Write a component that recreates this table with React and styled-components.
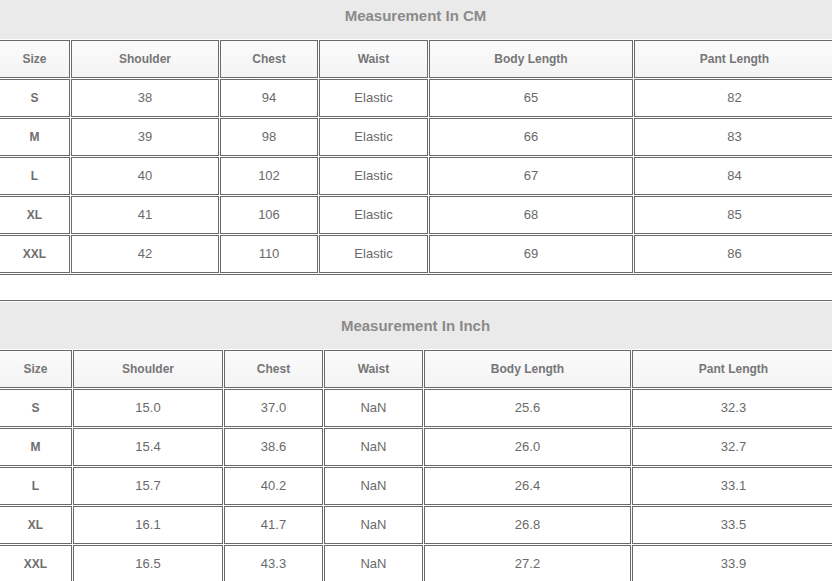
import styled, { createGlobalStyle } from 'styled-components';

const GlobalStyle = createGlobalStyle`
  html, body {
    margin: 0;
    padding: 0;
    background: #fff;
  }
  body {
    font-family: 'Liberation Sans', Arial, sans-serif;
  }
`

const headers = ['Size', 'Shoulder', 'Chest', 'Waist', 'Body Length', 'Pant Length'];

const charts = [
  {
    title: 'Measurement In CM',
    columns: [71, 148, 98, 109, 204, 201],
    rows: [
      ['S', '38', '94', 'Elastic', '65', '82'],
      ['M', '39', '98', 'Elastic', '66', '83'],
      ['L', '40', '102', 'Elastic', '67', '84'],
      ['XL', '41', '106', 'Elastic', '68', '85'],
      ['XXL', '42', '110', 'Elastic', '69', '86'],
    ],
  },
  {
    title: 'Measurement In Inch',
    columns: [73, 150, 99, 99, 207, 203],
    rows: [
      ['S', '15.0', '37.0', 'NaN', '25.6', '32.3'],
      ['M', '15.4', '38.6', 'NaN', '26.0', '32.7'],
      ['L', '15.7', '40.2', 'NaN', '26.4', '33.1'],
      ['XL', '16.1', '41.7', 'NaN', '26.8', '33.5'],
      ['XXL', '16.5', '43.3', 'NaN', '27.2', '33.9'],
    ],
  },
];

export default function App() {
  return (
    <Page>
      <GlobalStyle />
      {charts.map((chart, i) => (
        <Chart key={chart.title} $first={i === 0}>
          <Band>{chart.title}</Band>
          <Grid $cols={chart.columns.map((w) => w + 'px').join(' ')}>
            {headers.map((h) => (
              <HeadCell key={h}>{h}</HeadCell>
            ))}
            {chart.rows.map((row) =>
              row.map((v, j) => (
                <Cell key={row[0] + j} $size={j === 0}>
                  {v}
                </Cell>
              ))
            )}
          </Grid>
        </Chart>
      ))}
    </Page>
  )
}

const Page = styled.div`
  width: 832px;
  height: 581px;
  overflow: hidden;
  background: #fff;
`

const Chart = styled.div`
  margin: ${(p) => (p.$first ? '-10px' : '25px')} -2px 0 -3px;
  border: 1px solid #6a6a6a;
  padding: 1px;
  background: #fff;
`

const Band = styled.div`
  height: 47px;
  display: flex;
  align-items: center;
  justify-content: center;
  background: #eaeaea;
  color: #8a8a8a;
  font-size: 15px;
  font-weight: bold;
`

const Grid = styled.div`
  display: grid;
  grid-template-columns: ${(p) => p.$cols};
  grid-auto-rows: 38px;
  gap: 1px;
  margin-top: 1px;
`

const HeadCell = styled.div`
  box-sizing: border-box;
  border: 1px solid #6a6a6a;
  background: linear-gradient(180deg, #fbfbfb 0%, #f4f4f4 100%);
  display: flex;
  align-items: center;
  justify-content: center;
  color: #767676;
  font-size: 12px;
  font-weight: bold;
`

const Cell = styled.div`
  box-sizing: border-box;
  border: 1px solid #6a6a6a;
  background: #fff;
  display: flex;
  align-items: center;
  justify-content: center;
  padding-bottom: 1px;
  color: ${(p) => (p.$size ? '#6e6e6e' : '#6a6a6a')};
  font-size: ${(p) => (p.$size ? '12px' : '13px')};
  font-weight: ${(p) => (p.$size ? 'bold' : 'normal')};
`
